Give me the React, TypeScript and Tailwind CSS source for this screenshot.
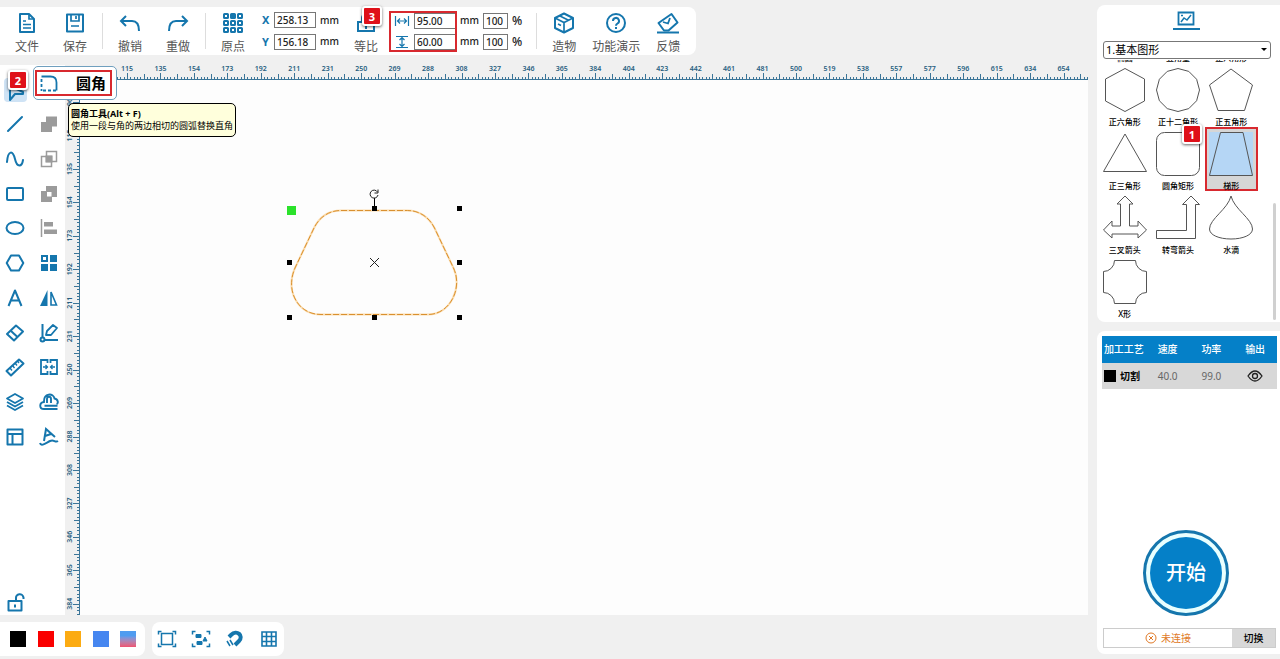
import React from "react";

const BLUE = "#1576ad";

function Icon({ size = 20, box = 20, w = 2, color = BLUE, children }: { size?: number; box?: number; w?: number; color?: string; children: React.ReactNode }) {
    return (
        <svg width={size} height={size} viewBox={`0 0 ${box} ${box}`} fill="none" stroke={color} strokeWidth={w} aria-hidden="true" className="block shrink-0">
            {children}
        </svg>
    );
}

const icons = {
    file: <Icon><path d="M3 1h9l5 5v13H3z" strokeLinejoin="round" /><path d="M12 1v5h5M6 8h3M6 11.500h8M6 15h8" strokeWidth="1.700" /></Icon>,
    save: <Icon><path d="M2 1.5h16v17H2z" strokeLinejoin="round" /><path d="M6 2v6h8V2M11 3v3M6 13h8" strokeWidth="1.7" /></Icon>,
    undo: <Icon size={22} box={22}><path d="M7 4 2 9l5 5M2 9h11c5 0 7 3 7 10" /></Icon>,
    redo: <Icon size={22} box={22}><path d="m15 4 5 5-5 5M20 9H9c-5 0-7 3-7 10" /></Icon>,
    origin: (
        <Icon size={22} box={22}>
            {[0, 1, 2].map((r) => [0, 1, 2].map((c) => (
                <rect key={`${r}${c}`} x={2 + c * 7} y={2 + r * 7} width="4" height="4" rx="0.5" fill={r === 0 && c === 1 ? BLUE : "none"} />
            )))}
        </Icon>
    ),
    ratio: <Icon><path d="M6 9H2v9h16V9h-4M6 9V5a4 4 0 0 1 8 0v4M10 11v5" /></Icon>,
    cube: <Icon size={22} box={22}><path d="m11 1.500 9 4.500v10l-9 4.500L2 16V6z" strokeLinejoin="round" /><path d="m2 6 9 4.500L20 6M11 10.500v10M6.500 3.800l9 4.500M5 12l3 1.500" strokeWidth="1.7" /></Icon>,
    help: <Icon size={22} box={22}><circle cx="11" cy="11" r="9" /><path d="M8 9a3 3 0 1 1 4.500 2.500c-1 .6-1.500 1-1.500 2.200M11 15v2" /></Icon>,
    feedback: <Icon size={22} box={22}><path d="M7 18.500 1.500 11 14.500 2l6 8.500-9 8z" strokeLinejoin="round" /><path d="m6 10 5 1.500 2-5.500" strokeWidth="1.800" /><path d="M0 20.500h22" /></Icon>,
};

const leftTools = [
    { name: "直线", icon: <path d="m3 17 14-14" strokeLinecap="round" /> },
    { name: "曲线", icon: <path d="M2 13C3 1 8 1 10 10s7 8 8 1" strokeLinecap="round" /> },
    { name: "矩形", icon: <rect x="2" y="4" width="16" height="12" rx="1" /> },
    { name: "椭圆", icon: <ellipse cx="10" cy="10" rx="8.500" ry="6" /> },
    { name: "多边形", icon: <path d="M6 2.500h8l4.300 7.500-4.300 7.500H6L1.700 10z" strokeLinejoin="round" /> },
    { name: "文本", icon: <path d="M3.500 18 10 2.500 16.500 18M6 12.500h8" strokeLinejoin="round" /> },
    { name: "橡皮擦", icon: <><path d="m2 11 9-8.500 7 6L9 17.500z" strokeLinejoin="round" /><path d="m6 8 6.500 6" /></> },
    { name: "测量", icon: <><path d="M1.500 14 14 2.500l4.500 4L6 18.500z" strokeLinejoin="round" /><path d="m5 11 2 2.500M7.500 8.500l2 2.500M10 6l2 2.500M12.500 4l1.500 2" strokeWidth="1.4" /></> },
    { name: "图层", icon: <path d="m10 2 8 4.500-8 4.500-8-4.500zM2 10l8 4.500 8-4.500M2 13.500l8 4.500 8-4.500" strokeLinejoin="round" strokeWidth="1.8" /> },
    { name: "布局", icon: <path d="M2.500 2.500h15v15h-15zM2.500 7h15M7.500 7v10.500" strokeLinejoin="round" /> },
];

const rightTools = [
    { name: "合并", color: "#9b9b9b", icon: <path d="M7 2.500h11v10h-5V18H2V8h5z" fill="#9b9b9b" stroke="none" /> },
    { name: "相交", color: "#9b9b9b", icon: <><path d="M7.500 2.500h10v10h-10zM2.500 7.500h10v10h-10z" strokeWidth="1.5" /><path d="M7.500 7.500h5v5h-5z" fill="#9b9b9b" /></> },
    { name: "相减", color: "#9b9b9b", icon: <path d="M7 2h11v11h-5v5H2V7h5zM8 8v4.500h4.500V8z" fill="#9b9b9b" fillRule="evenodd" stroke="none" /> },
    { name: "对齐", color: "#9b9b9b", icon: <><path d="M2.500 1v18" strokeWidth="1.500" /><path d="M5 4h9v4.500H5zM5 11.500h13V16H5z" fill="#9b9b9b" stroke="none" /></> },
    { name: "阵列", color: BLUE, icon: <><path d="M3 3h5v5H3z" /><path d="M11 2h7v7h-7zM2 11h7v7H2zM11 11h7v7h-7z" fill={BLUE} stroke="none" /></> },
    { name: "镜像", color: BLUE, icon: <><path d="M8.500 2v16H1z" fill={BLUE} stroke="none" /><path d="M12 4v13h5.500z" strokeWidth="1.6" /></> },
    { name: "编辑", color: BLUE, icon: <><path d="M3.500 1v14M6 17h13" /><circle cx="3.500" cy="16.500" r="2" /><path d="m7 12 1-4 6-6 4 3-6 7z" strokeWidth="1.800" strokeLinejoin="round" /></> },
    { name: "拼接", color: BLUE, icon: <><path d="M8.500 6V3H2v14h6.500v-3M11.500 6V3H18v14h-6.500v-3" strokeWidth="1.800" /><path d="M4 10h4M6.500 8l2 2-2 2M16 10h-4M13.500 8l-2 2 2 2" strokeWidth="1.300" /></> },
    { name: "偏移", color: BLUE, icon: <path d="M18.500 17H5c-5 0-5-6.500 0-7C4.500 1 14.500.5 15.500 6.500c4 1 4 5 2 5.500M18.500 13.800H5.500M8 11V7c0-3 4-3 4 0v4" strokeWidth="1.900" /> },
    { name: "路径文字", color: BLUE, icon: <><path d="M5 14 7 2l9 8M6 9l6-2" /><path d="M1 16c1 4 6 0 10-2s5 2 8 0" /></> },
];

const step = 33.45;
const labels = [96, 115, 135, 154, 173, 192, 211, 231, 250, 269, 288, 308, 327, 346, 365, 384, 404, 423, 442, 461, 481, 500, 519, 538, 557, 577, 596, 615, 634, 654];

function Ruler({ vertical = false }: { vertical?: boolean }) {
    const start = vertical ? 22 : 13;
    const shown = vertical ? labels.slice(0, 16) : labels.slice(1);
    const ticks = Array.from({ length: shown.length * 10 + 6 }, (_, i) => {
        const n = i - 6;
        const p = Math.round(start + (n * step) / 10) + 0.5;
        const from = n % 10 === 0 ? 8 : n % 5 === 0 ? 9 : 12;
        return vertical ? `M${from} ${p}H15` : `M${p} ${from}V15`;
    }).join("");
    return (
        <svg className="block h-full w-full" aria-hidden="true">
            <path d={ticks} stroke="#3b7598" strokeWidth="1" />
            <path d={vertical ? "M14.500 0V2000" : "M0 14.500H4000"} stroke="#3b7598" strokeWidth="1" />
            {shown.map((label, i) => {
                const p = start + i * step;
                return (
                    <text key={label} x={vertical ? 0 : p} y={vertical ? 0 : 6} transform={vertical ? `translate(7 ${p}) rotate(-90)` : undefined} textAnchor="middle" className="fill-[#285f80] text-[7px] font-semibold">
                        {label}
                    </text>
                );
            })}
        </svg>
    );
}

const dodecagon = Array.from({ length: 12 }, (_, i) => {
    const a = (i * Math.PI) / 6;
    return `${22 + 21.5 * Math.sin(a)},${22 - 21.5 * Math.cos(a)}`;
}).join(" ");

const shapes = [
    { name: "正六角形", el: <polygon points="22,.5 41.5,11 41.5,33 22,43.5 2.5,33 2.5,11" /> },
    { name: "正十二角形", el: <polygon points={dodecagon} /> },
    { name: "正五角形", el: <polygon points="22,1 43.5,17 35.5,42.5 9,42.5 .5,17" /> },
    { name: "正三角形", el: <polygon points="22,2 43.5,39.5 .5,39.5" /> },
    { name: "圆角矩形", el: <rect x=".5" y=".5" width="43" height="43" rx="8" /> },
    { name: "梯形", active: true, el: <polygon points="11.500,.5 34,.5 43.5,43.5 .5,43.5" /> },
    { name: "三叉箭头", el: <polygon points="22,0 30,8 26.5,8 26.5,30 35,30 35,25 43.500,34 35,42 35,38 9,38 9,42 .5,34 9,25 9,30 17.5,30 17.5,8 14,8" /> },
    { name: "转弯箭头", el: <polygon points="35,0 43.5,8.5 39.5,8.5 39.5,42.5 .5,42.5 .5,34.5 30.5,34.5 30.5,8.5 26.5,8.5" /> },
    { name: "水滴", el: <path d="M22 0C19 13 .5 23 .5 33 .5 39 10 43 22 43s21.500-4 21.500-10C43.500 23 25 13 22 0z" /> },
    { name: "X形", el: <path d="M11.500.5H32.500a11 11 0 0 0 11 11v21a11 11 0 0 0-11 11H11.500a11 11 0 0 0-11-11v-21a11 11 0 0 0 11-11z" /> },
];

function ToolButton({ label, icon, wide = false }: { label: string; icon: React.ReactNode; wide?: boolean }) {
    return (
        <button className={`${wide ? "w-14" : "w-12"} flex shrink-0 flex-col items-center gap-1 pt-1 text-xs leading-4 text-[#555]`}>
            <span className="flex h-6 items-center">{icon}</span>
            <span className="whitespace-nowrap">{label}</span>
        </button>
    );
}

function Divider() {
    return <div className="mx-[3px] h-9 w-px shrink-0 bg-[#ddd]" />;
}

function Field({ label, value, unit, small = false }: { label: React.ReactNode; value: string; unit: string; small?: boolean }) {
    return (
        <label className="flex items-center gap-1 text-[10px] font-medium text-[#222]">
            {label}
            <input defaultValue={value} className={`${small ? "w-[25px]" : "w-[42px]"} h-4 border border-[#777] bg-white px-[2px] leading-[14px] outline-none`} />
            <span className={small ? "text-xs leading-4" : ""}>{unit}</span>
        </label>
    );
}

function Badge({ n, className }: { n: number; className: string }) {
    return (
        <span className={`absolute z-30 flex size-5 items-center justify-center rounded-[3px] border-2 border-white bg-[#df1019] text-[11px] leading-none font-bold text-white shadow-[0_1px_3px_rgba(0,0,0,0.6)] ${className}`}>
            {n}
        </span>
    );
}

function TopBar() {
    return (
        <header className="flex h-12 w-fit shrink-0 items-center rounded-r-lg bg-white pr-1 pl-[3px]">
            <ToolButton label="文件" icon={icons.file} />
            <ToolButton label="保存" icon={icons.save} />
            <Divider />
            <ToolButton label="撤销" icon={icons.undo} />
            <ToolButton label="重做" icon={icons.redo} />
            <Divider />
            <ToolButton label="原点" icon={icons.origin} />
            <div className="ml-[5px] flex flex-col gap-[5px]">
                <Field label={<b className="w-2 text-[11px] text-[#1576ad]">X</b>} value="258.13" unit="mm" />
                <Field label={<b className="w-2 text-[11px] text-[#1576ad]">Y</b>} value="156.18" unit="mm" />
            </div>
            <div className="relative ml-[3px]">
                <ToolButton label="等比" icon={icons.ratio} />
                <Badge n={3} className="-top-px left-5" />
            </div>
            <div className="relative flex gap-1 pl-1">
                <div className="pointer-events-none absolute -inset-y-[2px] -left-px w-[68px] border-2 border-[#d8292f]" />
                <div className="flex flex-col gap-[5px]">
                    <Field label={<Icon size={16} box={16} w={1.2}><path d="M1.500 3v10M14.500 3v10M4 8h8M6 5.500 3.500 8 6 10.500M10 5.500l2.500 2.500-2.500 2.500" /></Icon>} value="95.00" unit="mm" />
                    <Field label={<Icon size={16} box={16} w={1.2}><path d="M2 2.500h12M2 13.500h12M8 4v8M5.500 6 8 3.500 10.500 6M5.500 10 8 12.500l2.500-2.500" /></Icon>} value="60.00" unit="mm" />
                </div>
                <div className="flex flex-col gap-[5px]">
                    <Field label={null} value="100" unit="%" small />
                    <Field label={null} value="100" unit="%" small />
                </div>
            </div>
            <div className="w-[11px]" />
            <Divider />
            <ToolButton label="造物" icon={icons.cube} />
            <ToolButton label="功能演示" icon={icons.help} wide />
            <ToolButton label="反馈" icon={icons.feedback} />
        </header>
    );
}

function SideTools() {
    return (
        <aside className="relative flex w-[65px] shrink-0 flex-col bg-white">
            <div className="flex h-[42px] items-center pl-1">
                <button aria-label="节点" className="mt-2 flex h-6 w-[23px] items-end justify-center rounded bg-[#cfe3f5]">
                    <Icon><path d="M4 18V4l13 6v2H9z" strokeLinejoin="round" /></Icon>
                </button>
            </div>
            <div className="flex h-[347px] gap-[14px] pl-[5px]">
                {[leftTools, rightTools].map((list, i) => (
                    <div key={i} className="grid grid-rows-10 items-center">
                        {list.map((tool) => (
                            <button key={tool.name} aria-label={tool.name}>
                                <Icon color={"color" in tool ? (tool.color as string) : BLUE}>{tool.icon}</Icon>
                            </button>
                        ))}
                    </div>
                ))}
            </div>
            <button aria-label="解锁" className="mt-auto mb-[2px] ml-[6px] w-5">
                <Icon><path d="M2.500 8h13v9.500h-13zM10 8V5.500a3.500 3.500 0 0 1 7.500-1V6M9 11.500v3" strokeLinejoin="round" /></Icon>
            </button>

            {/* Flyout of the node tool */}
            <Badge n={2} className="top-[5px] left-2" />
            <button className="absolute top-px left-[33px] z-20 h-[34px] w-[84px] rounded-[5px] border border-[#6f9fbe] bg-white p-px pr-1 text-left">
                <span className="flex h-[26px] items-center justify-between border-2 border-[#d8292f] pr-1 pl-[3px]">
                    <Icon size={18} box={18} w={1.8}><path d="M1.500 2.500h9q6 0 6 6v8" /><path d="M1.500 5v12M3 16.500h14" strokeDasharray="3 2" /></Icon>
                    <span className="text-[15px] leading-5 font-bold text-black">圆角</span>
                </span>
            </button>
            <div role="tooltip" className="absolute top-[38px] left-[68px] z-20 rounded-[5px] border border-black bg-[#ffffdc] px-[2px] py-1 text-[9px] leading-3 whitespace-nowrap text-black">
                <p className="font-bold">圆角工具(Alt + F)</p>
                <p>使用一段与角的两边相切的圆弧替换直角</p>
            </div>
        </aside>
    );
}

function Drawing() {
    return (
        <svg width="210" height="155" viewBox="270 175 210 155" fill="none" aria-label="梯形" className="absolute top-[95px] left-[190px]">
            <path d="M341 210.500H407.500C419 210.500 429 217 434.500 228L453.500 268C463 288 450 314.500 428 314.500H321C298 314.500 285 291 295 268L314 228C319.500 217 329 210.500 341 210.500Z" stroke="#fbdcae" strokeWidth="2" />
            <path d="M341 210.500H407.500C419 210.500 429 217 434.500 228L453.500 268C463 288 450 314.500 428 314.500H321C298 314.500 285 291 295 268L314 228C319.500 217 329 210.500 341 210.500Z" stroke="#d9902f" strokeDasharray="6 2" />
            <rect x="287" y="206" width="9" height="9" fill="#2be22b" />
            {[[374, 208], [459, 208], [289, 262], [459, 262], [289, 317], [374, 317], [459, 317]].map(([x, y]) => (
                <rect key={`${x}-${y}`} x={x - 2} y={y - 2} width="5" height="5" fill="#000" />
            ))}
            <path d="M374.500 198v9" stroke="#000" />
            <path d="M377.500 192a4 4 0 1 0 .5 3M378 189.500v3.500h-3.500" stroke="#222" />
            <path d="m370 258 9 9M379 258l-9 9" stroke="#222" />
        </svg>
    );
}

function BottomBar() {
    return (
        <footer className="flex h-11 shrink-0 items-center gap-[7px] pt-1">
            <div className="flex h-[34px] w-[145px] items-center justify-between rounded-r-lg bg-white pr-[9px] pl-[10px]">
                <button aria-label="黑色" className="size-4 bg-black" />
                <button aria-label="红色" className="size-4 bg-[#fa0000]" />
                <button aria-label="橙色" className="size-4 bg-[#fcab12]" />
                <button aria-label="蓝色" className="size-4 bg-[#4686f0]" />
                <button aria-label="渐变" className="size-4 bg-linear-to-b from-[#4f9cf0] from-30% to-[#f05070]" />
            </div>
            <div className="flex h-[34px] w-[132px] items-center justify-between rounded-lg bg-white px-[5px]">
                <button aria-label="画框">
                    <Icon w={1.5}><path d="M4.500 4.500h11v11h-11z" /><path d="M1.500 5.500V2.500h3M15.500 2.500h3v3M18.500 14.500v3h-3M4.500 17.500h-3v-3" /></Icon>
                </button>
                <button aria-label="选中">
                    <Icon w={1.5}><path d="M1.500 5.500V2.500h3M15.500 2.500h3v3M18.500 14.500v3h-3M4.500 17.500h-3v-3" /><path d="M5 5.500h5v3H5zM6 12.500h5v3H6zM14 8l2 4h-4z" fill={BLUE} strokeWidth="1" /></Icon>
                </button>
                <button aria-label="吸附">
                    <Icon w={4}><path d="m4 8 2-2c6-6 13 1 8 6l-4 4" /><path d="m2 12 3 5M5 11l3 5" strokeWidth="1.5" /></Icon>
                </button>
                <button aria-label="网格">
                    <Icon w={1.6}><path d="M3 3h14v14H3zM7.500 3v14M12.500 3v14M3 7.500h14M3 12.500h14" /></Icon>
                </button>
            </div>
        </footer>
    );
}

function ShapePanel() {
    return (
        <section className="relative flex h-[317px] shrink-0 flex-col rounded-l-lg bg-white">
            <div className="flex flex-col items-center pt-[5px] pr-[5px]">
                <button aria-label="图形库" className="flex h-5 w-[27px] justify-center border-b-2 border-[#1576ad]">
                    <Icon size={18} box={18} w={1.8}><path d="M1.500 2.500h15v12h-15z" /><path d="m4 12 3-4 3 2 4-5M4 5.500h2" strokeWidth="1.5" /></Icon>
                </button>
            </div>
            <div className="relative mt-[11px] mr-[9px] ml-[6px]">
                <select aria-label="图形分类" className="block h-[18px] w-full appearance-none rounded-[3px] border border-[#777] bg-white px-[2px] text-[11px] leading-4 text-black outline-none">
                    <option>1.基本图形</option>
                </select>
                <span className="pointer-events-none absolute top-[7px] right-1 border-x-[3px] border-t-[3px] border-x-transparent border-t-black" />
            </div>
            <div className="mt-px ml-px flex-1 overflow-hidden text-[8px] leading-[10px] font-medium text-black">
                {/* Tail of the row scrolled out above */}
                <div className="grid h-[3px] w-40 grid-cols-3 content-end overflow-hidden text-center">
                    <span>椭圆</span>
                    <span>五角星</span>
                    <span>正八角形</span>
                </div>
                <div className="grid w-40 grid-cols-3">
                    {shapes.map((shape) => (
                        <button key={shape.name} className={`flex h-16 flex-col items-center gap-[5px] ${shape.active ? "border-2 border-[#d8292f] bg-[#d6d6d6] pt-[3px]" : "pt-[5px]"}`}>
                            <svg width="44" height="44" viewBox="0 0 44 44" fill="none" stroke="#555" strokeWidth="1" className={`shrink-0 ${shape.active ? "bg-[#b5d6f5]" : ""}`}>
                                {shape.el}
                            </svg>
                            <span className="whitespace-nowrap">{shape.name}</span>
                        </button>
                    ))}
                </div>
            </div>
            <Badge n={1} className="top-[119px] left-[85px]" />
            <span className="absolute right-1 bottom-[2px] h-[117px] w-[3px] rounded-full bg-[#d0d0d0]" />
        </section>
    );
}

function JobPanel() {
    return (
        <section className="flex flex-1 flex-col rounded-l-lg bg-white pt-[5px]">
            <div className="pr-[3px] pl-[5px]">
                <table className="w-full table-fixed border-collapse text-center text-[10px]">
                    <thead>
                        <tr className="h-[27px] bg-[#0580c8] text-white">
                            <th className="p-0 font-medium whitespace-nowrap">加工工艺</th>
                            <th className="p-0 font-medium">速度</th>
                            <th className="p-0 font-medium">功率</th>
                            <th className="p-0 font-medium">输出</th>
                        </tr>
                    </thead>
                    <tbody>
                        <tr className="h-[26px] bg-[#d8d8d8] text-[#666]">
                            <td className="p-0">
                                <span className="flex items-center gap-1 pl-[2px] font-bold text-black">
                                    <i className="size-3 bg-black" />
                                    切割
                                </span>
                            </td>
                            <td className="p-0">40.0</td>
                            <td className="p-0">99.0</td>
                            <td className="p-0">
                                <button aria-label="输出" className="block w-full">
                                    <svg width="16" height="12" viewBox="0 0 16 12" fill="none" stroke="#222" strokeWidth="1.300" className="mx-auto block">
                                        <path d="M1 6q7-10 14 0-7 10-14 0z" />
                                        <circle cx="8" cy="6" r="2.500" />
                                    </svg>
                                </button>
                            </td>
                        </tr>
                    </tbody>
                </table>
            </div>
            <div className="mt-auto flex justify-center pr-[5px]">
                <button className="flex size-[86px] items-center justify-center rounded-full border-[3px] border-[#1576ad] bg-[#e9ffff] p-1">
                    <span className="flex size-full items-center justify-center rounded-full bg-[#0580c8] text-xl leading-none font-medium text-white">开始</span>
                </button>
            </div>
            <div className="mt-3 mr-1 mb-[6px] ml-[6px] flex h-5 border border-[#ccc] text-[10px]">
                <button className="flex flex-1 items-center justify-center gap-1 text-[#e07a28]">
                    <Icon size={12} box={12} w={1} color="#e07a28"><circle cx="6" cy="6" r="5" /><path d="m4 4 4 4M8 4 4 8" /></Icon>
                    未连接
                </button>
                <button className="w-[43px] bg-[#d8d8d8] font-medium text-black">切换</button>
            </div>
        </section>
    );
}

export default function App() {
    return (
        <div className="flex h-screen gap-[9px] overflow-hidden bg-[#f0f0f0] font-['Noto_Sans','Noto_Sans_CJK_SC',sans-serif]">
            <div className="flex min-w-0 flex-1 flex-col pt-[7px]">
                <TopBar />
                <div className="mt-[10px] flex min-h-0 flex-1">
                    <SideTools />
                    <div className="flex min-w-0 flex-1 flex-col">
                        <div className="h-[15px] shrink-0 pl-[49px]">
                            <Ruler />
                        </div>
                        <div className="flex min-h-0 flex-1">
                            <div className="w-[15px] shrink-0">
                                <Ruler vertical />
                            </div>
                            <main className="relative min-w-0 flex-1 bg-[#fdfdfd]">
                                <Drawing />
                            </main>
                        </div>
                    </div>
                </div>
                <BottomBar />
            </div>
            <div className="flex w-[183px] shrink-0 flex-col gap-[9px] pt-[5px] pb-[5px]">
                <ShapePanel />
                <JobPanel />
            </div>
        </div>
    );
}
